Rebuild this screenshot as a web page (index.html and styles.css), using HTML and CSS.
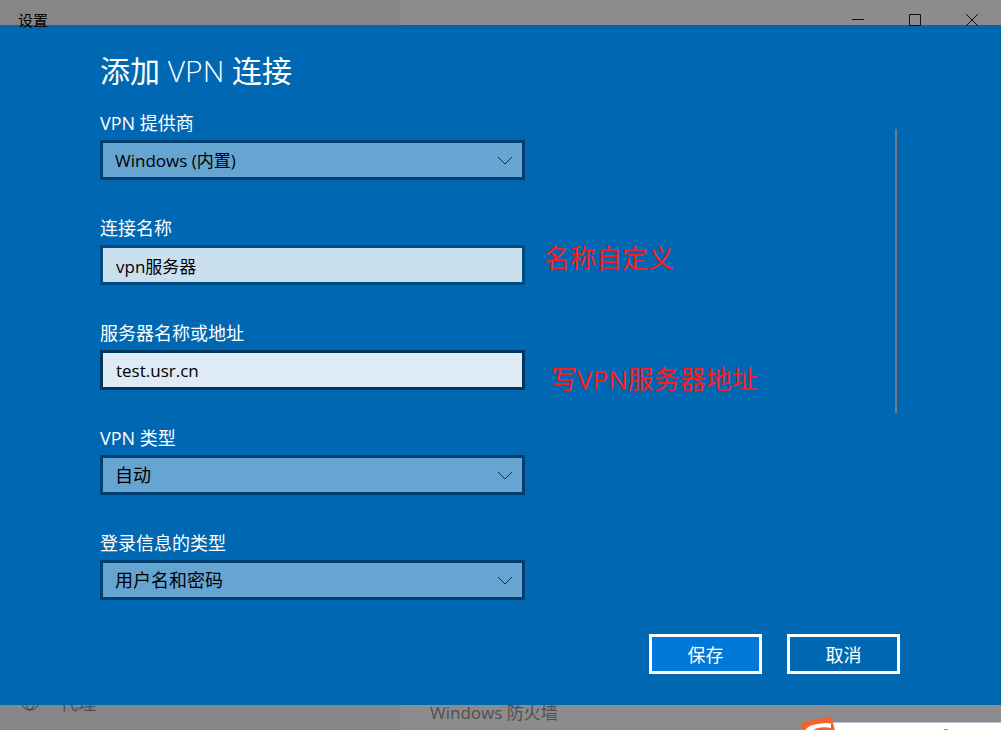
FILE: index.html
```html
<!DOCTYPE html>
<html lang="zh-CN">
<head>
<meta charset="utf-8">
<title>设置</title>
<link rel="stylesheet" href="styles.css">
</head>
<body>
<div class="window">
  <header class="titlebar">
    <span class="titlebar-name">设置</span>
    <div class="caption-buttons">
      <button class="caption-button" type="button" aria-label="最小化"><svg width="14" height="14" viewBox="0 0 14 14"><path d="M1 6.5H13"/></svg></button>
      <button class="caption-button" type="button" aria-label="最大化"><svg width="14" height="14" viewBox="0 0 14 14"><path d="M1.5 1.5H12.5V12.5H1.5Z"/></svg></button>
      <button class="caption-button" type="button" aria-label="关闭"><svg width="14" height="14" viewBox="0 0 14 14"><path d="M1 1L13 13M13 1L1 13"/></svg></button>
    </div>
  </header>

  <main class="dialog">
    <h1 class="dialog-title">添加 <span class="light">VPN</span> 连接</h1>
    <form class="form">
      <div class="fields">
        <div class="field">
          <label class="label" for="provider">VPN 提供商</label>
          <div class="row">
            <div class="control">
              <select class="box select compact" id="provider"><option>Windows (内置)</option></select>
              <svg class="chevron" width="16" height="10" viewBox="0 0 16 10"><path d="M1 1L8 8L15 1"/></svg>
            </div>
          </div>
        </div>
        <div class="field">
          <label class="label" for="name">连接名称</label>
          <div class="row">
            <div class="control"><input class="box input compact" id="name" type="text" value="vpn服务器"></div>
            <span class="note note-name">名称自定义</span>
          </div>
        </div>
        <div class="field">
          <label class="label" for="server">服务器名称或地址</label>
          <div class="row">
            <div class="control"><input class="box input input-active compact" id="server" type="text" value="test.usr.cn"></div>
            <span class="note note-server">写VPN服务器地址</span>
          </div>
        </div>
        <div class="field">
          <label class="label" for="type">VPN 类型</label>
          <div class="row">
            <div class="control">
              <select class="box select" id="type"><option>自动</option></select>
              <svg class="chevron" width="16" height="10" viewBox="0 0 16 10"><path d="M1 1L8 8L15 1"/></svg>
            </div>
          </div>
        </div>
        <div class="field">
          <label class="label" for="signin">登录信息的类型</label>
          <div class="row">
            <div class="control">
              <select class="box select" id="signin"><option>用户名和密码</option></select>
              <svg class="chevron" width="16" height="10" viewBox="0 0 16 10"><path d="M1 1L8 8L15 1"/></svg>
            </div>
          </div>
        </div>
      </div>
      <div class="scrollbar"></div>
    </form>
    <div class="actions">
      <button class="button button-primary" type="button">保存</button>
      <button class="button" type="button">取消</button>
    </div>
  </main>

  <footer class="backdrop">
    <div class="backdrop-nav">
      <svg class="globe" width="20" height="20" viewBox="0 0 20 20"><circle cx="10" cy="10" r="9"/><ellipse cx="10" cy="10" rx="4" ry="9"/><path d="M1 10H19M2 6H18"/></svg>
      <span>代理</span>
    </div>
    <div class="backdrop-content">Windows 防火墙</div>
    <div class="ime">
      <div class="ime-bar"><span class="ime-dot"></span></div>
      <svg class="ime-logo" width="38" height="15" viewBox="0 0 38 15">
        <path d="M3 6L29 1Q31 0 32 3L35 15H3L1 9Q1 7 3 6Z" fill="#f4622d"/>
        <path d="M5 15Q7 10 15 8.500Q25 6 31 7.500V12Q24 10.500 18 12Q14 13 13 15Z" fill="#fff"/>
      </svg>
    </div>
  </footer>
</div>
</body>
</html>
```
FILE: styles.css
```css
* {
  box-sizing: border-box;
}

body {
  margin: 0;
  font-family: "Open Sans", "Noto Sans CJK SC", sans-serif;
  font-size: 18px;
  color: #fff;
}

button,
input,
select {
  font: inherit;
}

.window {
  display: flex;
  flex-direction: column;
  min-height: 100vh;
  background: linear-gradient(90deg, #868686 400px, #8c8c8c 400px);
}

.titlebar {
  position: relative;
  z-index: 1;
  display: flex;
  justify-content: space-between;
  height: 25px;
  padding: 0 1px 0 18px;
  color: #000;
}

.titlebar-name {
  padding-top: 10px;
  font-size: 15px;
  line-height: 20px;
}

.caption-buttons {
  display: flex;
  height: 40px;
}

.caption-button {
  display: flex;
  align-items: center;
  justify-content: center;
  width: 57px;
  padding: 0;
  border: 0;
  background: none;
}

.caption-button svg {
  fill: none;
  stroke: #111;
}

.dialog {
  display: flex;
  flex: 1;
  flex-direction: column;
  padding: 25px 101px 31px 100px;
  background: #0067b3;
}

.dialog-title {
  margin: 0;
  font-size: 30px;
  font-weight: 400;
  line-height: 42px;
}

.light {
  font-weight: 300;
}

.form {
  display: flex;
  flex: 1;
  justify-content: space-between;
  padding-top: 18px;
}

.fields {
  display: flex;
  flex: 1;
  flex-direction: column;
  gap: 37px;
}

.label {
  display: block;
  line-height: 26px;
  margin-bottom: 4px;
}

.field {
  height: 68px;
}

.row {
  display: flex;
  height: 40px;
}

.control {
  position: relative;
  width: 425px;
}

.box {
  display: block;
  width: 100%;
  height: 40px;
  margin: 0;
  padding: 0 12px;
  border: 3px solid #003f6f;
  border-radius: 0;
  color: #000;
}

.compact {
  font-size: 17px;
}

.select {
  appearance: none;
  background: #66a4d2;
}

.input {
  padding-left: 13px;
  border-color: #004a82;
  background: #cbe0ee;
  outline: 0;
}

.input-active {
  border-color: #003660;
  background: #deebf4;
}

.chevron {
  position: absolute;
  top: 16px;
  right: 12px;
  fill: none;
  stroke: #12304a;
  pointer-events: none;
}

.note {
  color: #ff1a1a;
  font-size: 26px;
  line-height: 22px;
  white-space: nowrap;
}

.note-name {
  margin: 2px 0 0 19px;
}

.note-server {
  align-self: flex-end;
  margin-left: 26px;
}

.scrollbar {
  width: 2px;
  height: 284px;
  margin: 19px 3px 0 0;
  background: #7a7a7a;
}

.actions {
  display: flex;
  justify-content: flex-end;
  gap: 25px;
}

.button {
  width: 113px;
  height: 40px;
  padding: 0;
  border: 3px solid #fff;
  background: #0067b3;
  color: #fff;
}

.button-primary {
  background: #0078d7;
}

.backdrop {
  position: relative;
  display: flex;
  height: 25px;
  overflow: hidden;
  color: #505050;
}

.backdrop-nav {
  display: flex;
  align-items: flex-start;
  gap: 20px;
  width: 430px;
  margin-top: -14px;
  padding-left: 20px;
  line-height: 24px;
}

.globe {
  fill: none;
  stroke: #404040;
}

.backdrop-content {
  font-size: 17px;
  line-height: 16px;
}

.ime {
  position: absolute;
  right: 0;
  bottom: 0;
  width: 201px;
  height: 14px;
}

.ime-bar {
  height: 9px;
  margin: 6px 0 0 20px;
  border-top: 1px solid #b4c4d2;
  background: #fff;
}

.ime-dot {
  display: block;
  width: 8px;
  height: 8px;
  margin: 6px 0 0 122px;
  border-radius: 50%;
  background: #18b4c8;
}

.ime-logo {
  position: absolute;
  top: 0;
  left: 0;
}
```
